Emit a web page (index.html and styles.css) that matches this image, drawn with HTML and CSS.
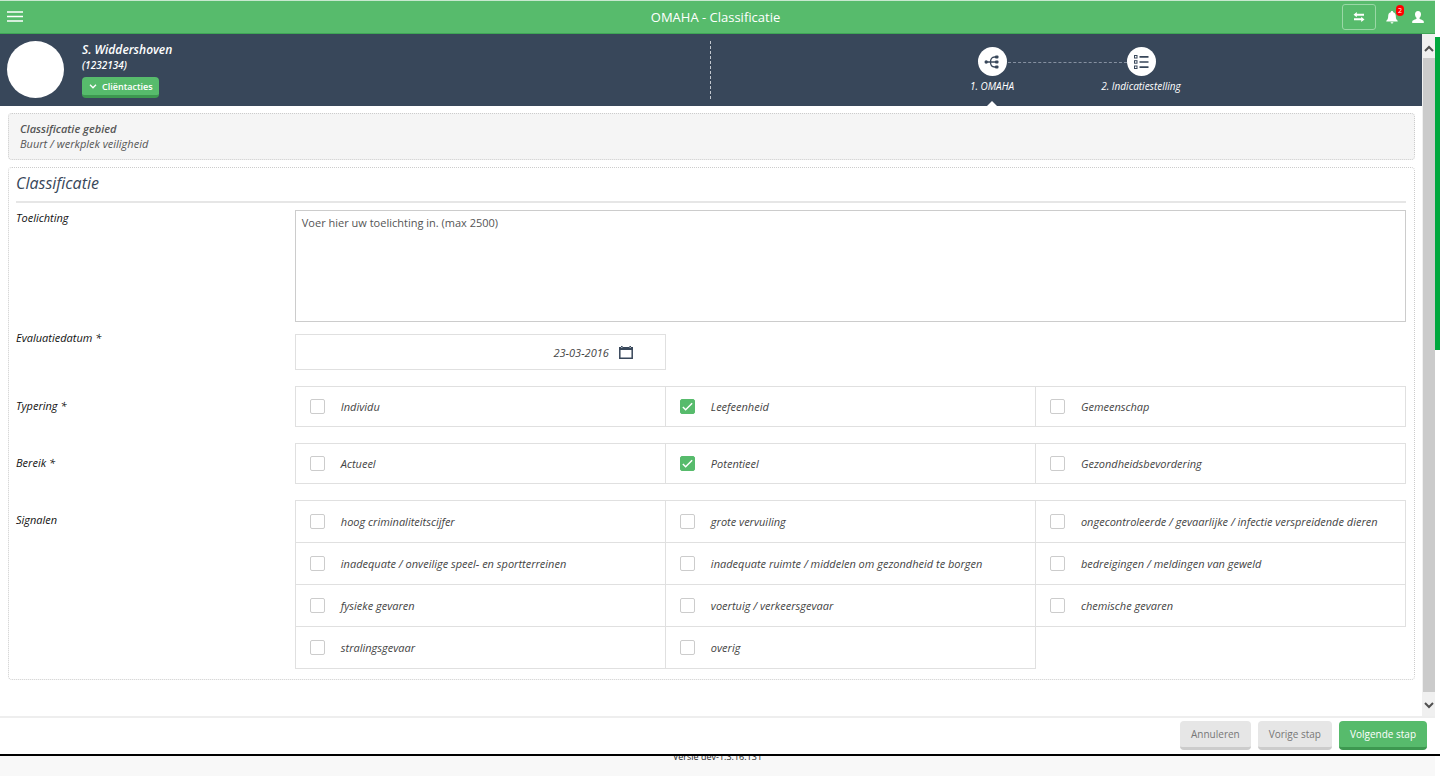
FILE: index.html
```html
<!DOCTYPE html>
<html lang="nl">
<head>
<meta charset="utf-8">
<title>OMAHA - Classificatie</title>
<link rel="stylesheet" href="styles.css">
</head>
<body>
<div class="window">
  <div class="app">
    <header class="topbar">
      <button class="icon-button menu" aria-label="Menu">
        <svg width="16" height="12" viewBox="0 0 16 12"><path d="M0 1h16M0 5.500h16M0 10h16" stroke="#fff" stroke-width="1.600"/></svg>
      </button>
      <h1 class="topbar-title">OMAHA - Classificatie</h1>
      <div class="topbar-tools">
        <button class="icon-button swap" aria-label="Wisselen">
          <svg width="12" height="10" viewBox="0 0 12 10"><path d="M3.800 0v1.700H11v2H3.800v1.500L.5 2.700zM8.200 4.800v1.500H1v2h7.200V10l3.300-2.600z" fill="#fff"/></svg>
        </button>
        <button class="icon-button bell" aria-label="Meldingen">
          <svg width="12" height="13" viewBox="0 0 12 13"><path d="M6 0c.8 0 1.200.5 1.200 1.200C9 1.700 9.800 3 9.800 5c0 2.800.7 3.800 1.900 4.700v.9H.3v-.9C1.500 8.800 2.200 7.800 2.200 5c0-2 .8-3.300 2.600-3.800C4.800.5 5.200 0 6 0zM4.600 11.200h2.800a1.400 1.400 0 0 1-2.800 0z" fill="#fff"/></svg>
          <span class="badge">2</span>
        </button>
        <button class="icon-button user" aria-label="Profiel">
          <svg width="12" height="12" viewBox="0 0 12 12"><path d="M6 0c2 0 3 1.300 3 3.200 0 1.500-.6 2.800-1.500 3.600v1c.5.900 4.100 1 4.300 2.900V12H.2v-1.300c.2-1.900 3.800-2 4.300-2.900v-1C3.600 6 3 4.700 3 3.200 3 1.300 4 0 6 0z" fill="#fff"/></svg>
        </button>
      </div>
    </header>

    <div class="body">
      <main class="content">
        <section class="client">
          <div class="client-info">
            <div class="avatar"></div>
            <div class="client-text">
              <div class="client-name">S. Widdershoven</div>
              <div class="client-id">(1232134)</div>
              <button class="button client-actions">
                <svg width="8" height="5" viewBox="0 0 8 5"><path d="M1 .8l3 3 3-3" fill="none" stroke="#fff" stroke-width="1.300"/></svg>
                Cliëntacties
              </button>
            </div>
          </div>
          <nav class="steps" aria-label="Stappen">
            <a class="step step-active" href="#omaha">
              <span class="step-circle">
                <svg width="16" height="14" viewBox="0 0 16 14"><g fill="none" stroke="#38475a" stroke-width="1.300"><path d="M2 7h10M12 2h-1.500C8 2 6.500 4 6.500 7s1.500 5 4 5H12"/></g><g fill="#38475a"><circle cx="2.200" cy="7" r="1.700"/><rect x="11" y=".5" width="3.500" height="3" rx="1"/><rect x="11" y="5.500" width="3.500" height="3" rx="1"/><rect x="11" y="10.500" width="3.500" height="3" rx="1"/></g></svg>
              </span>
              <span>1. OMAHA</span>
            </a>
            <a class="step" href="#indicatie">
              <span class="step-circle">
                <svg width="16" height="16" viewBox="0 0 16 16"><g fill="none" stroke="#38475a"><rect x="1.500" y="1.500" width="2.500" height="2.500"/><rect x="1.500" y="6.700" width="2.500" height="2.500"/><rect x="1.500" y="12" width="2.500" height="2.500"/><path d="M6.500 2.800h9M6.500 8h9M6.500 13.200h9" stroke-width="1.700"/></g></svg>
              </span>
              <span>2. Indicatiestelling</span>
            </a>
          </nav>
        </section>

        <section class="panel area">
          <h2 class="area-title">Classificatie gebied</h2>
          <p class="area-name">Buurt / werkplek veiligheid</p>
        </section>

        <form class="panel form">
          <h2 class="form-title">Classificatie</h2>
          <div class="row row-note">
            <label class="label" for="toelichting">Toelichting</label>
            <textarea class="note" id="toelichting" placeholder="Voer hier uw toelichting in. (max 2500)"></textarea>
          </div>
          <div class="row row-date">
            <label class="label" for="datum">Evaluatiedatum *</label>
            <div class="thirds">
              <div class="date">
                <input class="date-input" id="datum" type="text" value="23-03-2016">
                <button class="icon-button" type="button" aria-label="Kies datum">
                  <svg width="14" height="13" viewBox="0 0 14 13"><path d="M.8 2v10.200h12.400V2" fill="none" stroke="#38475a" stroke-width="1.500"/><path d="M0 1h2V0h1.600v1h6.800V0H12v1h2v3H0z" fill="#38475a"/><path d="M2.300 1.500h1M10.700 1.500h1" stroke="#fff" stroke-width=".8"/></svg>
                </button>
              </div>
            </div>
          </div>
          <div class="row row-options" role="group" aria-labelledby="typering">
            <span class="label" id="typering">Typering *</span>
            <div class="thirds">
              <label class="option"><input type="checkbox"><span>Individu</span></label>
              <label class="option"><input type="checkbox" checked><span>Leefeenheid</span></label>
              <label class="option"><input type="checkbox"><span>Gemeenschap</span></label>
            </div>
          </div>
          <div class="row row-options" role="group" aria-labelledby="bereik">
            <span class="label" id="bereik">Bereik *</span>
            <div class="thirds">
              <label class="option"><input type="checkbox"><span>Actueel</span></label>
              <label class="option"><input type="checkbox" checked><span>Potentieel</span></label>
              <label class="option"><input type="checkbox"><span>Gezondheidsbevordering</span></label>
            </div>
          </div>
          <div class="row row-options" role="group" aria-labelledby="signalen">
            <span class="label" id="signalen">Signalen</span>
            <div class="thirds signals">
              <label class="option"><input type="checkbox"><span>hoog criminaliteitscijfer</span></label>
              <label class="option"><input type="checkbox"><span>grote vervuiling</span></label>
              <label class="option"><input type="checkbox"><span>ongecontroleerde / gevaarlijke / infectie verspreidende dieren</span></label>
              <label class="option"><input type="checkbox"><span>inadequate / onveilige speel- en sportterreinen</span></label>
              <label class="option"><input type="checkbox"><span>inadequate ruimte / middelen om gezondheid te borgen</span></label>
              <label class="option"><input type="checkbox"><span>bedreigingen / meldingen van geweld</span></label>
              <label class="option"><input type="checkbox"><span>fysieke gevaren</span></label>
              <label class="option"><input type="checkbox"><span>voertuig / verkeersgevaar</span></label>
              <label class="option"><input type="checkbox"><span>chemische gevaren</span></label>
              <label class="option"><input type="checkbox"><span>stralingsgevaar</span></label>
              <label class="option"><input type="checkbox"><span>overig</span></label>
            </div>
          </div>
        </form>
      </main>
      <div class="scrollbar" aria-hidden="true">
        <svg class="scroll-arrow" viewBox="0 0 12 24"><path d="M2 17l4-4 4 4" fill="none" stroke="#505050" stroke-width="2"/></svg>
        <div class="scroll-thumb"></div>
        <svg class="scroll-arrow" viewBox="0 0 12 24"><path d="M2 11l4 4 4-4" fill="none" stroke="#505050" stroke-width="2"/></svg>
      </div>
    </div>

    <div class="actions">
      <button class="button action">Annuleren</button>
      <button class="button action">Vorige stap</button>
      <button class="button action action-primary">Volgende stap</button>
    </div>
  </div>
  <div class="edge"><div class="edge-bar"></div></div>
</div>
<footer class="version">Versie dev-1.3.16.131</footer>
</body>
</html>
```

FILE: styles.css
```css
* { box-sizing: border-box; }

body {
  display: flex;
  flex-direction: column;
  min-height: 100vh;
  margin: 0;
  background: #fff;
  color: #222;
  font: 11px/15px "Open Sans", sans-serif;
}

h1, h2, p { margin: 0; font-weight: 400; }

button, input, textarea { font: inherit; }

.window {
  display: flex;
  flex: 1;
  border-bottom: 2px solid #000;
}

.app {
  display: flex;
  flex: 1;
  flex-direction: column;
  min-width: 0;
}

.topbar {
  display: grid;
  grid-template-columns: 1fr auto 1fr;
  align-items: center;
  height: 34px;
  padding: 0 11px 0 7px;
  border-top: 1px solid #c8e8cf;
  border-bottom: 1px solid #3fa656;
  background: #57bb6c;
  color: #fff;
}

.topbar-title { font-size: 13px; line-height: 18px; }

.topbar-tools {
  display: flex;
  justify-content: flex-end;
  align-items: center;
}

.icon-button {
  display: flex;
  align-items: center;
  justify-content: center;
  padding: 0;
  border: 0;
  background: none;
}

.menu { justify-self: start; }

.swap {
  width: 34px;
  height: 26px;
  margin-right: 10px;
  border: 1px solid #9ad8a6;
  border-radius: 3px;
}

.bell { position: relative; margin-right: 14px; }

.badge {
  position: absolute;
  top: -6px;
  right: -6px;
  width: 8px;
  height: 11px;
  border-radius: 4px;
  background: #f00;
  color: #fff;
  font-size: 7px;
  line-height: 11px;
  text-align: center;
}

.body { display: flex; flex: 1; }

.content { flex: 1; min-width: 0; }

.client {
  display: grid;
  grid-template-columns: 1fr 1fr;
  height: 72px;
  background: #38475a;
  color: #fff;
  font-style: italic;
}

.client-info {
  display: flex;
  gap: 18px;
  margin: 7px 0;
  padding-left: 7px;
  border-right: 1px dashed #c3c8ce;
}

.avatar {
  width: 57px;
  height: 57px;
  border-radius: 50%;
  background: #fff;
}

.client-text { font-weight: 600; }

.client-name { font-size: 12px; line-height: 18px; }

.client-id { font-size: 10px; line-height: 12px; }

.button {
  border: 0;
  border-bottom: 3px solid #ccc;
  border-radius: 4px;
  background: #e6e6e6;
  color: #777;
  font-size: 10px;
  font-style: normal;
}

.client-actions {
  display: flex;
  align-items: center;
  gap: 5px;
  height: 21px;
  margin-top: 6px;
  padding: 0 6px 0 7px;
  border-bottom-color: #3d9850;
  background: #57bb6c;
  color: #fff;
  font-size: 9px;
  font-weight: 600;
}

.steps {
  display: flex;
  justify-content: center;
}

.step {
  position: relative;
  display: flex;
  flex-direction: column;
  align-items: center;
  gap: 3px;
  width: 149px;
  padding-top: 13px;
  color: #fff;
  font-size: 10px;
  text-decoration: none;
}

.step-circle {
  display: flex;
  align-items: center;
  justify-content: center;
  width: 29px;
  height: 29px;
  border-radius: 50%;
  background: #fff;
}

.step-active::before {
  position: absolute;
  top: 28px;
  left: 90px;
  width: 119px;
  border-top: 1px dashed #8590a0;
  content: "";
}

.step-active::after {
  position: absolute;
  bottom: 0;
  border: 5px solid transparent;
  border-top-width: 0;
  border-bottom-color: #fff;
  content: "";
}

.panel {
  margin: 7px 7px 7px 8px;
  border: 1px dotted #ccc;
  border-radius: 4px;
}

.area {
  padding: 7px 11px 8px;
  background: #f5f5f5;
  color: #555;
  font-style: italic;
}

.area-title { font-size: 11px; font-weight: 600; }

.form { padding: 0 8px 10px 7px; font-style: italic; }

.form-title {
  margin-bottom: 7px;
  padding: 4px 0 7px;
  border-bottom: 2px solid #e6e6e6;
  color: #38475a;
  font-size: 16px;
  line-height: 22px;
}

.row {
  display: grid;
  grid-template-columns: 1fr 4fr;
  column-gap: 1px;
  margin-bottom: 16px;
}

.row:last-child { margin-bottom: 0; }

.row-note { margin-bottom: 8px; }

.row-date .thirds { margin-top: 4px; }

.row-options > .label { padding-top: 12px; }

.label { color: #111; }

.note {
  width: 100%;
  height: 112px;
  padding: 4px 6px;
  border: 1px solid #ccc;
  font-style: normal;
  resize: none;
}

.note::placeholder { color: #555; opacity: 1; }

.thirds {
  display: grid;
  grid-template-columns: repeat(3, 1fr);
  padding: 1px 0 0 1px;
}

.date, .option {
  display: flex;
  align-items: center;
  margin: -1px 0 0 -1px;
  border: 1px solid #e0e0e0;
}

.date {
  gap: 10px;
  height: 36px;
  padding: 0 32px 0 10px;
}

.date-input {
  flex: 1;
  min-width: 0;
  padding: 0;
  border: 0;
  background: none;
  color: #444;
  font-style: italic;
  text-align: right;
}

.option {
  gap: 16px;
  height: 41px;
  padding: 0 14px;
  color: #444;
}

.signals .option { height: 43px; }

.option input {
  flex: none;
  width: 15px;
  height: 15px;
  margin: 0;
  border: 1px solid #ccc;
  border-radius: 2px;
  background: #fff;
  appearance: none;
}

.option input:checked {
  border-color: #57bb6c;
  background: #57bb6c url("data:image/svg+xml,%3Csvg xmlns='http://www.w3.org/2000/svg' viewBox='0 0 14 14'%3E%3Cpath d='M2 7.500l3 3 7-7' fill='none' stroke='white' stroke-width='1.600'/%3E%3C/svg%3E");
}

.scrollbar {
  display: flex;
  flex-direction: column;
  width: 13px;
  padding-left: 1px;
  background: #f0f0f0;
}

.scroll-arrow { width: 12px; height: 24px; }

.scroll-thumb { flex: 1; background: #cbcbcb; }

.actions {
  display: flex;
  justify-content: flex-end;
  gap: 7px;
  padding: 3px 8px 4px;
  border-top: 2px solid #eee;
}

.action { height: 29px; padding: 0 11px; }

.action-primary {
  border-bottom-color: #3d9850;
  background: #57bb6c;
  color: #fff;
}

.edge { width: 5px; padding-top: 37px; }

.edge-bar { height: 313px; background: #00a83e; }

.version {
  height: 20px;
  margin: 0 5px 1px 0;
  overflow: hidden;
  background: #f8f8f8;
  font-size: 9px;
  line-height: 2px;
  text-align: center;
}
```
